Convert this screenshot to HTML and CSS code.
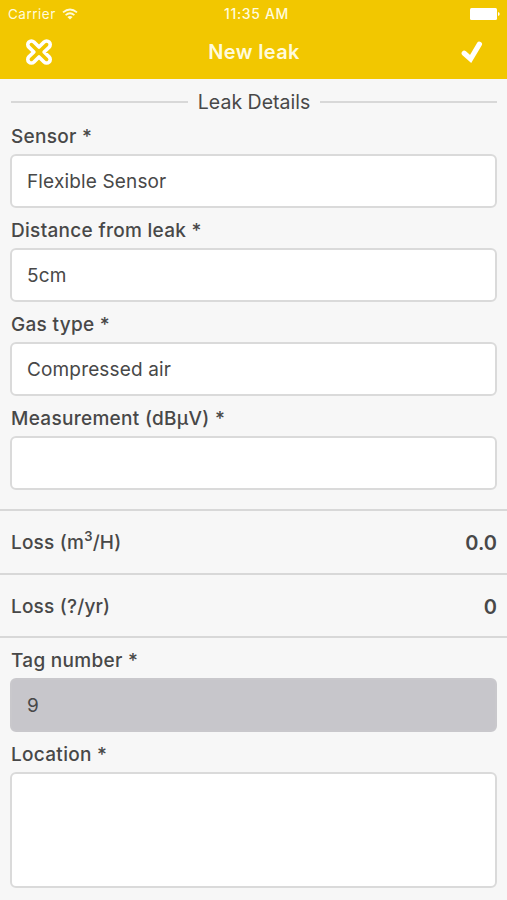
FILE: index.html
```html
<!DOCTYPE html>
<html lang="en">
<head>
<meta charset="utf-8">
<title>New leak</title>
<link rel="stylesheet" href="styles.css">
</head>
<body>
<header class="header">
  <div class="status">
    <div class="carrier"><span class="carrier-name">Carrier</span>
      <svg width="16" height="12" viewBox="0 0 16 12" fill="none" stroke="#fffbd8" stroke-width="1.8"><path d="M1 4.4Q8-1.4 15 4.4M3.6 7.1Q8 3.5 12.4 7.1"/><path d="M5.4 8.9Q8 7 10.6 8.9L8 11.5Z" fill="#fffbd8" stroke="none"/></svg>
    </div>
    <span class="time">11:35 AM</span>
    <svg class="battery" width="30" height="12" viewBox="0 0 30 12" fill="#fff"><rect width="27" height="12" rx="1.5"/><path d="M28 4q1.7.4 1.7 2T28 8z"/></svg>
  </div>
  <div class="nav">
    <svg class="close" width="30" height="30" viewBox="0 0 30 30" fill="none" stroke="#fff" stroke-width="3.6" stroke-linejoin="round"><path d="M15 10.1L20.05 5.05A3.6 3.6 0 0 1 25.15 10.15L20.1 15L25.15 19.85A3.6 3.6 0 0 1 20.05 24.95L15 19.9L9.95 24.95A3.6 3.6 0 0 1 4.85 19.85L9.9 15L4.85 10.15A3.6 3.6 0 0 1 9.95 5.05Z"/></svg>
    <h1 class="title">New leak</h1>
    <svg class="check" width="24" height="24" viewBox="0 0 24 24" fill="none" stroke="#fff" stroke-width="5.2"><path d="M4.2 13.2L10.6 19L19.4 4.2" stroke-linecap="round"/></svg>
  </div>
</header>
<main>
  <h2 class="legend"><span class="legend-text">Leak Details</span></h2>
  <section class="fields">
    <div class="label">Sensor *</div>
    <div class="input">Flexible Sensor</div>
    <div class="label">Distance from leak *</div>
    <div class="input">5cm</div>
    <div class="label">Gas type *</div>
    <div class="input">Compressed air</div>
    <div class="label">Measurement (dBμV) *</div>
    <div class="input"></div>
  </section>
  <section class="results">
    <div class="row"><span>Loss (m<sup>3</sup>/H)</span><b class="value">0.0</b></div>
    <div class="row"><span>Loss (?/yr)</span><b class="value">0</b></div>
  </section>
  <section class="fields">
    <div class="label">Tag number *</div>
    <div class="input disabled">9</div>
    <div class="label">Location *</div>
    <div class="input area"></div>
  </section>
</main>
</body>
</html>
```
FILE: styles.css
```css
* { box-sizing: border-box; }
body {
  margin: 0;
  height: 900px;
  overflow: hidden;
  background: #f7f7f7;
  color: #484848;
  font: 500 19px/24px Inter, "Liberation Sans", sans-serif;
}
.header {
  height: 79px;
  background: #f2c700;
  color: #fffbdc;
}
.status {
  display: grid;
  grid-template-columns: 1fr auto 1fr;
  align-items: center;
  height: 27px;
  padding: 0 7px 0 8px;
  font-size: 13px;
}
.carrier { display: flex; align-items: center; gap: 6px; }
.carrier-name { font-weight: 400; font-size: 13.5px; letter-spacing: .5px; }
.time { padding-left: 5px; font-size: 14px; letter-spacing: .65px; }
.battery { justify-self: end; }
.nav {
  display: grid;
  grid-template-columns: 1fr auto 1fr;
  align-items: center;
  height: 50px;
  padding: 0 23px 0 24px;
}
.title { margin: 0; font-size: 20px; font-weight: 600; letter-spacing: .35px; }
.check { justify-self: end; }
.legend {
  display: flex;
  align-items: center;
  gap: 10px;
  height: 46px;
  margin: 0 10px 0 11px;
  font-size: 19.5px;
  font-weight: 400;
}
.legend::before, .legend::after {
  content: "";
  flex: 1;
  height: 2px;
  background: #d8d8d8;
}
.fields { padding: 0 10px; }
.label { height: 40px; padding: 11px 1px 0; letter-spacing: .3px; }
.legend + .fields .label:first-child { height: 29px; padding-top: 0; }
.input {
  height: 54px;
  padding: 14px 15px;
  border: 2px solid #dadada;
  border-radius: 6px;
  background: #fff;
  font-weight: 400;
  letter-spacing: .15px;
}
.disabled { background: #c7c6cb; border-color: #c9c8cc; }
.area { height: 116px; }
.results { margin-top: 19px; border-top: 2px solid #d8d8d8; }
.row {
  display: flex;
  align-items: center;
  justify-content: space-between;
  height: 63.5px;
  padding: 3px 10px 0 11px;
  border-bottom: 2px solid #d8d8d8;
  letter-spacing: .2px;
}
.value { font-size: 20px; font-weight: 600; letter-spacing: 0; }
sup { font-size: 13px; font-weight: 600; line-height: 0; vertical-align: 8px; }
```
